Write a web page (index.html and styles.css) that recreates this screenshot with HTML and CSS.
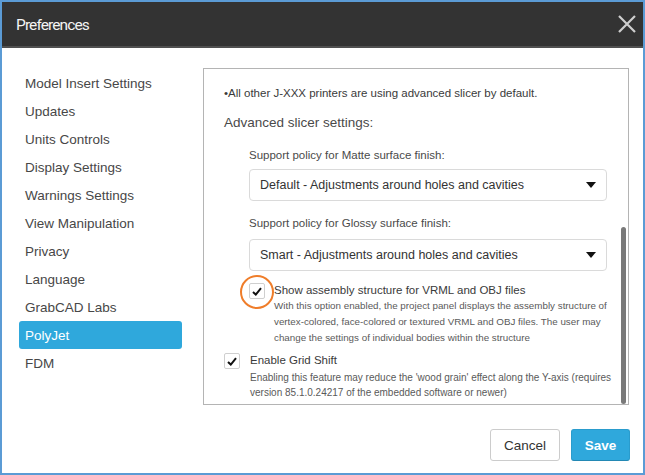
FILE: index.html
```html
<!DOCTYPE html>
<html lang="en">
<head>
<meta charset="utf-8">
<title>Preferences</title>
<link rel="stylesheet" href="styles.css">
</head>
<body>
<div class="dialog">
  <header class="titlebar">
    <span class="title">Preferences</span>
    <button class="close" aria-label="Close">
      <svg width="18" height="18" viewBox="0 0 18 18"><path d="M1 1 L17 17 M17 1 L1 17" stroke="#cfcfcf" stroke-width="2.2" fill="none"/></svg>
    </button>
  </header>
  <div class="body">
    <nav class="nav">
      <div class="nav-item">Model Insert Settings</div>
      <div class="nav-item">Updates</div>
      <div class="nav-item">Units Controls</div>
      <div class="nav-item">Display Settings</div>
      <div class="nav-item">Warnings Settings</div>
      <div class="nav-item">View Manipulation</div>
      <div class="nav-item">Privacy</div>
      <div class="nav-item">Language</div>
      <div class="nav-item">GrabCAD Labs</div>
      <div class="nav-item active">PolyJet</div>
      <div class="nav-item">FDM</div>
    </nav>
    <section class="panel">
      <p class="note">&bull;All other J-XXX printers are using advanced slicer by default.</p>
      <h2 class="adv">Advanced slicer settings:</h2>
      <div class="group">
        <div class="field-label first">Support policy for Matte surface finish:</div>
        <div class="select"><span>Default - Adjustments around holes and cavities</span><span class="caret"></span></div>
        <div class="field-label">Support policy for Glossy surface finish:</div>
        <div class="select second"><span>Smart - Adjustments around holes and cavities</span><span class="caret"></span></div>
        <div class="check-row row1">
          <span class="checkbox highlighted">
            <svg width="10" height="9" viewBox="0 0 10 9"><path d="M1 5 L3.8 7.6 L9 1.2" stroke="#111" stroke-width="2" fill="none"/></svg>
          </span>
          <div class="check-text">
            <div class="check-title">Show assembly structure for VRML and OBJ files</div>
            <div class="check-desc">With this option enabled, the project panel displays the assembly structure of<br>vertex-colored, face-colored or textured VRML and OBJ files. The user may<br>change the settings of individual bodies within the structure</div>
          </div>
        </div>
      </div>
      <div class="check-row row2">
        <span class="checkbox">
          <svg width="10" height="9" viewBox="0 0 10 9"><path d="M1 5 L3.8 7.6 L9 1.2" stroke="#111" stroke-width="2" fill="none"/></svg>
        </span>
        <div class="check-text">
          <div class="check-title">Enable Grid Shift</div>
          <div class="check-desc tight">Enabling this feature may reduce the 'wood grain' effect along the Y-axis (requires<br>version 85.1.0.24217 of the embedded software or newer)</div>
        </div>
      </div>
      <div class="scroll-thumb"></div>
    </section>
  </div>
  <footer class="footer">
    <button class="btn cancel">Cancel</button>
    <button class="btn save">Save</button>
  </footer>
</div>
</body>
</html>
```
FILE: styles.css
```css
html, body {
  margin: 0;
  padding: 0;
  background: #ffffff;
}

.dialog {
  width: 645px;
  height: 475px;
  box-sizing: border-box;
  border: 2px solid #5b9bd5;
  background: #ffffff;
  font-family: "Liberation Sans", Arial, Helvetica, sans-serif;
  display: flex;
  flex-direction: column;
  overflow: hidden;
}

.titlebar {
  height: 44px;
  background: #333333;
  border-bottom: 2px solid #505050;
  display: flex;
  align-items: center;
  justify-content: space-between;
  padding: 0 7px 0 14px;
  flex: none;
}

.title {
  font-family: Roboto, "Liberation Sans", sans-serif;
  font-size: 15.5px;
  letter-spacing: -0.9px;
  color: #f4f4f4;
  padding-top: 1px;
}

.close {
  border: 0;
  background: transparent;
  padding: 0;
  width: 18px;
  height: 18px;
  display: flex;
  cursor: pointer;
}

.body {
  display: flex;
  padding: 20px 13px 0 17px;
  flex: none;
}

.nav {
  width: 163px;
  margin-top: 1px;
  margin-right: 21px;
  flex: none;
}

.nav-item {
  height: 28px;
  line-height: 29px;
  padding-left: 6px;
  font-size: 13.5px;
  color: #474747;
  border-radius: 3px;
  white-space: nowrap;
}

.nav-item.active {
  background: #2fa8dc;
  color: #ffffff;
}

.panel {
  position: relative;
  width: 426px;
  height: 337px;
  box-sizing: border-box;
  border: 1px solid #b4b4b4;
  padding: 0 0 0 20px;
  overflow: hidden;
}

.note {
  margin: 16px 0 0 0;
  line-height: 16px;
  font-size: 11.5px;
  color: #3a3a3a;
  white-space: nowrap;
}

.adv {
  margin: 12px 0 0 0;
  line-height: 20px;
  font-size: 13.5px;
  font-weight: normal;
  color: #4a4a4a;
}

.group {
  padding-left: 25px;
}

.field-label {
  margin-top: 14px;
  line-height: 16px;
  font-size: 11.5px;
  color: #4a4a4a;
}

.select {
  margin-top: 6px;
  width: 358px;
  height: 32px;
  box-sizing: border-box;
  border: 1px solid #dadada;
  border-radius: 4px;
  display: flex;
  align-items: center;
  justify-content: space-between;
  padding: 0 10px 0 10px;
  font-size: 12.5px;
  color: #333333;
}

.select.second {
  margin-top: 8px;
}

.caret {
  width: 0;
  height: 0;
  border-left: 5px solid transparent;
  border-right: 5px solid transparent;
  border-top: 6px solid #111111;
}

.check-row {
  display: flex;
  align-items: flex-start;
}

.row1 {
  margin-top: 11px;
}

.row2 {
  margin-top: 6px;
}

.row1 .check-text {
  margin-left: 9px;
}

.row2 .check-text {
  margin-left: 10px;
}

.checkbox {
  position: relative;
  width: 16px;
  height: 16px;
  box-sizing: border-box;
  border: 1px solid #cfcfcf;
  border-radius: 2px;
  background: #ffffff;
  display: flex;
  align-items: center;
  justify-content: center;
  flex: none;
  margin-top: 1px;
}

.checkbox.highlighted::after {
  content: "";
  position: absolute;
  left: -10px;
  top: -9px;
  width: 30px;
  height: 30px;
  border: 2px solid #ef7d2a;
  border-radius: 50%;
}

.check-title {
  line-height: 16px;
  font-size: 11.5px;
  color: #3a3a3a;
  white-space: nowrap;
}

.check-desc {
  line-height: 16px;
  font-size: 9.8px;
  color: #5a5a5a;
  white-space: nowrap;
}

.check-desc.tight {
  margin-top: 2px;
  line-height: 15px;
  font-size: 10px;
}

.scroll-thumb {
  position: absolute;
  right: 2px;
  top: 158px;
  width: 5px;
  height: 177px;
  background: #7a7a7a;
  border-radius: 3px;
}

.footer {
  display: flex;
  justify-content: flex-end;
  gap: 11px;
  padding: 24px 13px 0 0;
}

.btn {
  height: 32px;
  box-sizing: border-box;
  border-radius: 3px;
  font-family: "Liberation Sans", Arial, sans-serif;
  font-size: 13.5px;
  padding: 0;
  cursor: pointer;
}

.cancel {
  width: 70px;
  background: #ffffff;
  border: 1px solid #cccccc;
  color: #333333;
}

.save {
  width: 59px;
  background: #2fa8dc;
  border: 1px solid #2a9ccd;
  border-bottom-color: #2388b4;
  color: #ffffff;
  font-weight: bold;
}
```
